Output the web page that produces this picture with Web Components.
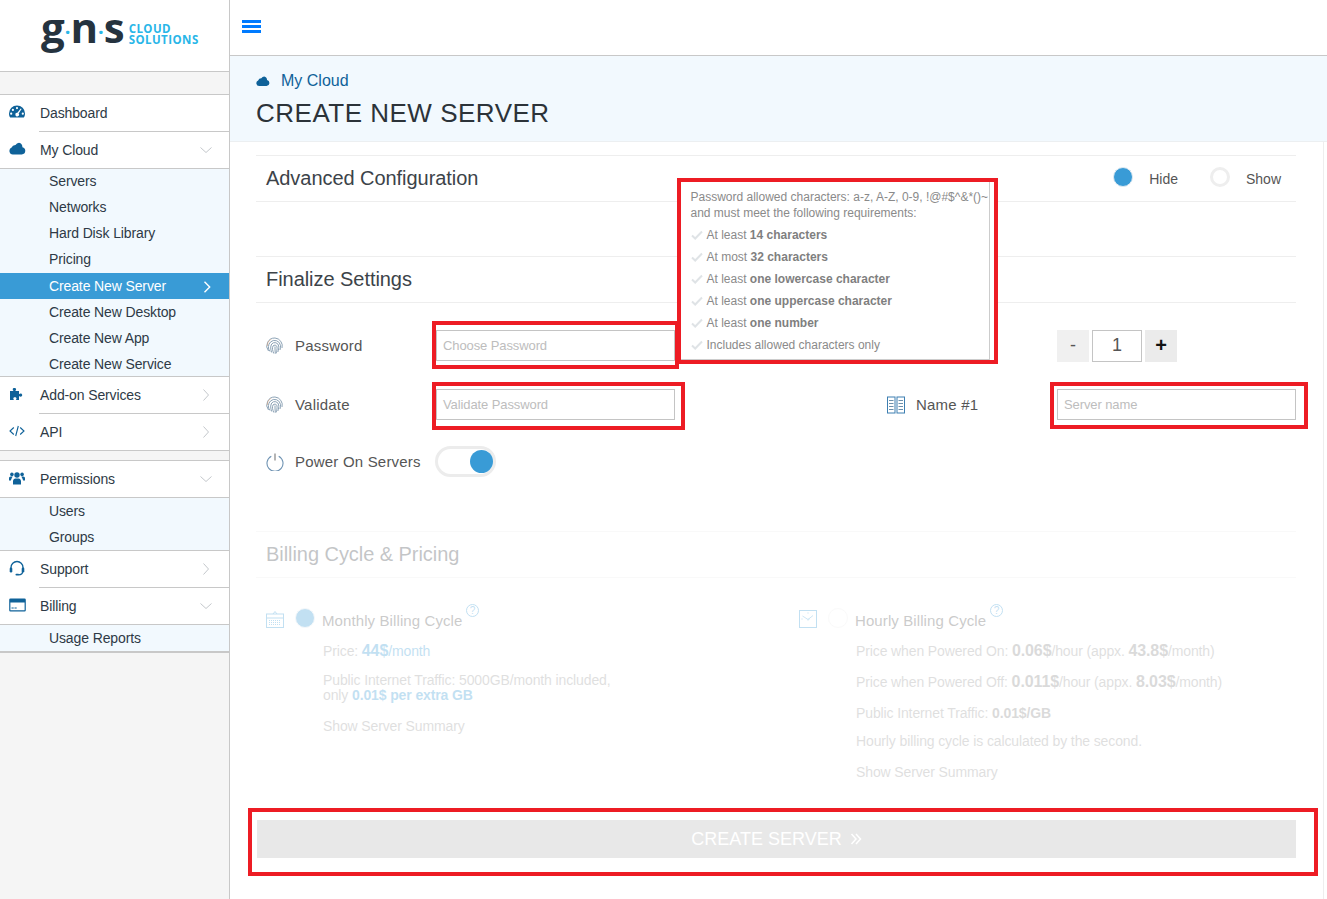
<!DOCTYPE html>
<html lang="en">
<head>
<meta charset="utf-8">
<title>Create New Server</title>
<style>
  html, body { margin: 0; height: 100%; }
  body { font-family: "Liberation Sans", Arial, sans-serif; color: #444; background: #fff; overflow: hidden; }
  .shell { display: flex; height: 899px; position: relative; }
</style>
</head>
<body>
<div class="shell">
  <side-bar>
    <brand-logo></brand-logo>
    <nav-group style="margin-top:22px">
      <nav-item label="Dashboard" icon="dashboard" sep></nav-item>
      <nav-item label="My Cloud" icon="cloud" arrow="down"></nav-item>
      <sub-list>
        <sub-item style="margin-top:-1px">Servers</sub-item>
        <sub-item>Networks</sub-item>
        <sub-item>Hard Disk Library</sub-item>
        <sub-item>Pricing</sub-item>
        <sub-item active style="margin-top:1px">Create New Server</sub-item>
        <sub-item>Create New Desktop</sub-item>
        <sub-item>Create New App</sub-item>
        <sub-item style="margin-bottom:-1px">Create New Service</sub-item>
      </sub-list>
      <nav-item label="Add-on Services" icon="puzzle" arrow="right" sep></nav-item>
      <nav-item label="API" icon="code" arrow="right"></nav-item>
    </nav-group>
    <nav-group style="margin-top:9px">
      <nav-item label="Permissions" icon="users" arrow="down"></nav-item>
      <sub-list>
        <sub-item>Users</sub-item>
        <sub-item>Groups</sub-item>
      </sub-list>
      <nav-item label="Support" icon="headset" arrow="right" sep></nav-item>
      <nav-item label="Billing" icon="card" arrow="down"></nav-item>
      <sub-list>
        <sub-item>Usage Reports</sub-item>
      </sub-list>
    </nav-group>
  </side-bar>

  <main-area>
    <top-bar></top-bar>
    <page-head crumb="My Cloud">CREATE NEW SERVER</page-head>
    <page-content>
      <section-head title="Advanced Configuration">
        <radio-opt checked>Hide</radio-opt>
        <radio-opt>Show</radio-opt>
      </section-head>
      <section-head title="Finalize Settings" style="margin-top:54px"></section-head>

      <form-grid>
        <form-field label="Password" icon="finger"><text-field>Choose Password</text-field></form-field>
        <form-field><qty-counter>1</qty-counter></form-field>
        <form-field label="Validate" icon="finger"><text-field>Validate Password</text-field></form-field>
        <form-field label="Name #1" icon="rack"><text-field>Server name</text-field></form-field>
        <form-field label="Power On Servers" icon="power" style="margin-top:-2px"><on-toggle></on-toggle></form-field>
      </form-grid>

      <billing-block>
        <section-head title="Billing Cycle &amp; Pricing"></section-head>
        <billing-cols>
          <billing-opt label="Monthly Billing Cycle" icon="calendar" checked>
            <bill-line style="margin-top:9px">Price: <b class="big hl">44$</b><span class="hl">/month</span></bill-line>
            <bill-line tight style="margin-top:12px">Public Internet Traffic: 5000GB/month included,<br>only <b class="hl">0.01$ per extra GB</b></bill-line>
            <bill-line style="margin-top:13px">Show Server Summary</bill-line>
          </billing-opt>
          <billing-opt label="Hourly Billing Cycle" icon="clock">
            <bill-line style="margin-top:9px">Price when Powered On: <b class="big">0.06$</b>/hour (appx. <b class="big">43.8$</b>/month)</bill-line>
            <bill-line style="margin-top:11px">Price when Powered Off: <b class="big">0.011$</b>/hour (appx. <b class="big">8.03$</b>/month)</bill-line>
            <bill-line style="margin-top:11px">Public Internet Traffic: <b>0.01$/GB</b></bill-line>
            <bill-line style="margin-top:8px">Hourly billing cycle is calculated by the second.</bill-line>
            <bill-line style="margin-top:11px">Show Server Summary</bill-line>
          </billing-opt>
        </billing-cols>
      </billing-block>

      <create-button>CREATE SERVER</create-button>
    </page-content>
  </main-area>

  <pw-tooltip>
    <tip-check>At least <b>14 characters</b></tip-check>
    <tip-check>At most <b>32 characters</b></tip-check>
    <tip-check>At least <b>one lowercase character</b></tip-check>
    <tip-check>At least <b>one uppercase character</b></tip-check>
    <tip-check>At least <b>one number</b></tip-check>
    <tip-check>Includes allowed characters only</tip-check>
  </pw-tooltip>

  <!-- red annotation frames drawn over the screenshot -->
  <mark-box style="left:677px;top:178px;width:321px;height:186px"></mark-box>
  <mark-box style="left:432px;top:321px;width:247px;height:48px"></mark-box>
  <mark-box style="left:432px;top:382px;width:253px;height:48px"></mark-box>
  <mark-box style="left:1050px;top:382px;width:258px;height:47px"></mark-box>
  <mark-box style="left:248px;top:808px;width:1070px;height:68px"></mark-box>
</div>

<script>
const ICONS = {
  dashboard: `<path fill-rule="evenodd" d="M8 1.5a8 8 0 0 0-8 8c0 1.6.4 3 1.2 4h13.6c.8-1 1.2-2.4 1.2-4a8 8 0 0 0-8-8zM8 3a1.1 1.1 0 1 1 0 2.2A1.1 1.1 0 0 1 8 3zM3.9 4.8a1.1 1.1 0 1 1 0 2.2 1.1 1.1 0 0 1 0-2.2zM2.2 8.6a1.1 1.1 0 1 1 0 2.2 1.1 1.1 0 0 1 0-2.2zM13.8 8.6a1.1 1.1 0 1 1 0 2.2 1.1 1.1 0 0 1 0-2.2zM11.7 4.6l.9.5-3 4.4a1.8 1.8 0 1 1-1.2-.7z"/>`,
  cloud: `<path d="M3.8 13.5A3.6 3.6 0 0 1 2.6 6.6 4 4 0 0 1 6.5 4 4.9 4.9 0 0 1 10 1.7a4.6 4.6 0 0 1 3.4 4.5 3.7 3.7 0 0 1-.6 7.3z"/>`,
  puzzle: `<path d="M1 5h3.6c-.5-.6-.9-1-.9-1.700C3.700 2.500 4.500 2 5.400 2s1.700.5 1.700 1.300c0 .7-.4 1.100-.9 1.700H10v3.300c.5-.5 1-.8 1.600-.8.9 0 1.600.7 1.600 1.600s-.7 1.600-1.600 1.600c-.6 0-1.100-.3-1.600-.8V14H6.800c.4-.5.7-1 .7-1.500 0-.9-.8-1.300-1.600-1.300s-1.600.4-1.600 1.300c0 .5.3 1 .7 1.500H1z"/>`,
  code: `<path fill="none" stroke="currentColor" stroke-width="1.100" d="M4.800 4.500 1 8l3.800 3.500M11.200 4.500 15 8l-3.800 3.500M9.300 3 6.700 13"/>`,
  users: `<circle cx="8" cy="5" r="2.700"/><circle cx="2.900" cy="4.400" r="1.800"/><circle cx="13.100" cy="4.400" r="1.800"/><path d="M4 14.500v-3.200C4 9.400 5.200 8.400 6.500 8.400h3c1.300 0 2.500 1 2.500 2.900v3.200zM0 10.500V8.400c0-1 .7-1.800 1.700-1.800h2c-.3.500-1 1.200-1.800 3.900zM16 10.500V8.400c0-1-.7-1.800-1.700-1.800h-2c.3.500 1 1.200 1.800 3.900z"/>`,
  headset: `<path fill="none" stroke="currentColor" stroke-width="1.300" d="M2 10.500V7.500a6 6 0 0 1 12 0v3M13.500 12c0 1.700-1.800 2.800-4 2.800"/><rect x=".7" y="7.500" width="2.600" height="5" rx="1.200"/><rect x="12.700" y="7.500" width="2.600" height="5" rx="1.200"/><rect x="6.500" y="13.800" width="3.500" height="1.800" rx=".8"/>`,
  card: `<path fill-rule="evenodd" d="M1.500 1.500h14a1.300 1.300 0 0 1 1.300 1.300v10.400a1.300 1.300 0 0 1-1.300 1.300h-14A1.300 1.300 0 0 1 .2 13.200V2.800a1.300 1.300 0 0 1 1.300-1.300zm-.1 4v7.700h14.200V5.500zM2.500 10.500h2.200v1H2.500zM5.500 10.500h2.200v1H5.500z"/>`,
  finger: `<g fill="none" stroke="#7f97ad" stroke-width=".9"><path d="M2.500 14A8 8 0 0 1 9 1a8 8 0 0 1 7 10"/><path d="M4 14.500A7 7 0 0 1 4.500 5 6 6 0 0 1 14.500 8.500c0 1.500 0 3-.5 4.500"/><path d="M5.700 15.500C4.500 12 4.200 9.800 5.700 7a4 4 0 0 1 7 2c.2 2 0 4-.9 6"/><path d="M7.800 16.500C6.500 13.500 6 11 7 9a2.300 2.300 0 0 1 4 .8c.2 2.300 0 4.200-1 6.700"/><path d="M9 9.500c0 2.500 0 4.500 .3 7"/></g><path fill="none" stroke="#d99a6c" stroke-width=".5" d="M1.200 9A8 8 0 0 1 5 2.200"/>`,
  power: `<g fill="none" stroke="#6f93b3" stroke-width="1.100"><path d="M5.300 3.200a8 8 0 1 0 7.400 0"/><path d="M9 .5v7" stroke="#777"/></g>`,
  rack: `<g fill="none" stroke="#3d7fb1" stroke-width="1"><rect x=".5" y="1" width="7.500" height="16"/><rect x="10" y="1" width="7.500" height="16"/></g><path stroke="#6c90ac" stroke-width="1" d="M2 4.500h4.500M2 7.500h4.500M2 10.500h4.500M2 13.500h4.500M11.500 4.500H16M11.500 7.500H16M11.500 10.500H16M11.500 13.500H16"/>`,
  calendar: `<g fill="none" stroke="#399bd6" stroke-width="1"><rect x=".5" y="4" width="17" height="13.500"/><path d="M.5 8h17M7 4l2-2.500L11 4"/></g><path stroke="#399bd6" stroke-dasharray="1 1" d="M3 10.500h12M3 12.500h12M3 14.500h12"/>`,
  clock: `<rect x=".5" y=".5" width="17" height="17" fill="none" stroke="#399bd6"/><path fill="none" stroke="#399bd6" stroke-width=".8" d="M3.500 6 9 9.500l5-4"/><path stroke="#399bd6" stroke-dasharray="1 6" d="M2.500 9H16M9 2.500V16"/>`
};

function define(name, css, html, extra) {
  const tpl = document.createElement("template");
  tpl.innerHTML = `<style>${css}</style>${html}`;
  class Comp extends HTMLElement {
    constructor() {
      super();
      this.attachShadow({ mode: "open" });
      this.shadowRoot.appendChild(tpl.content.cloneNode(true));
      if (extra) extra.call(this, this.shadowRoot);
    }
  }
  customElements.define(name, Comp);
}

const svgIcon = (name, size, box) =>
  `<svg width="${size}" height="${size}" viewBox="0 0 ${box} ${box}" fill="currentColor">${ICONS[name]}</svg>`;

/* ---------- sidebar ---------- */
define("side-bar", `
  :host { display: block; width: 229px; flex: none; box-sizing: content-box; height: 899px;
          background: #f5f5f5; border-right: 1px solid #c8c8c8; }
`, `<slot></slot>`);

define("brand-logo", `
  :host { display: flex; align-items: flex-start; height: 71px; box-sizing: content-box; background: #fff;
          border-bottom: 1px solid #c8c8c8; padding-left: 41px; overflow: hidden; }
  .gns { font: 700 42px/42px "Open Sans", sans-serif; color: #25333f; letter-spacing: -1px; margin-top: 6px; white-space: nowrap; }
  .gns i { font-style: normal; color: #29b6e8; font-size: 20px; vertical-align: 4px; margin: 0 1px; }
  .sub { font: 700 11.5px/11px "Open Sans", sans-serif; color: #29b6e8; margin: 23px 0 0 5px; letter-spacing: .45px; }
`, `<div class="gns">g<i>·</i>n<i>·</i>s</div><div class="sub">CLOUD<br>SOLUTIONS</div>`);

define("nav-group", `
  :host { display: block; background: #fff; border-top: 1px solid #c8c8c8; border-bottom: 1px solid #c8c8c8; }
`, `<slot></slot>`);

define("nav-item", `
  :host { display: block; position: relative; height: 37px; color: #2e3a46; font-size: 14px; }
  :host([sep]) { height: 37px; }
  .row { display: flex; align-items: center; height: 36px; }
  .ic { width: 40px; flex: none; padding-left: 9px; box-sizing: border-box; color: #0f6299; display: flex; margin-top: -1px; }
  .tx { flex: 1; letter-spacing: -.12px; margin-top: -1px; }
  .ch { margin-right: 17px; color: #c4c8cc; display: flex; }
  .line { display: none; height: 1px; background: #c8c8c8; margin-left: 39px; }
  :host([sep]) .line { display: block; }
  :host(:not([sep])) { height: 36px; }
`, `<div class="row"><span class="ic"></span><span class="tx"></span><span class="ch"></span></div><div class="line"></div>`,
function (root) {
  root.querySelector(".tx").textContent = this.getAttribute("label");
  root.querySelector(".ic").innerHTML = svgIcon(this.getAttribute("icon"), 17, 17);
  const arrow = this.getAttribute("arrow");
  if (arrow === "down") root.querySelector(".ch").innerHTML = `<svg width="12" height="12" viewBox="0 0 12 12" fill="none" stroke="currentColor"><path d="M.5 3.500 6 8.500l5.500-5"/></svg>`;
  if (arrow === "right") root.querySelector(".ch").innerHTML = `<svg width="12" height="12" viewBox="0 0 12 12" fill="none" stroke="currentColor"><path d="M3.500 .5 8.500 6l-5 5.500"/></svg>`;
});

define("sub-list", `
  :host { display: block; background: #f2f9fe; border-top: 1px solid #c8c8c8; border-bottom: 1px solid #c8c8c8; }
`, `<slot></slot>`);

define("sub-item", `
  :host { display: flex; align-items: center; justify-content: space-between; height: 26px; padding: 0 18px 0 49px;
          color: #2e3a46; font-size: 14px; letter-spacing: -.12px; }
  :host([active]) { background: #399bd6; color: #fff; }
  svg { display: none; margin-top: 2px; }
  :host([active]) svg { display: block; }
`, `<span><slot></slot></span><svg width="8" height="12" viewBox="0 0 8 12" fill="none" stroke="#fff" stroke-width="1.400"><path d="M1.500 .8 6.700 6l-5.200 5.200"/></svg>`);

/* ---------- main column ---------- */
define("main-area", `
  :host { display: flex; flex-direction: column; flex: 1; min-width: 0; }
`, `<slot></slot>`);

define("top-bar", `
  :host { display: block; height: 55px; flex: none; border-bottom: 1px solid #c8c8c8; box-sizing: content-box; padding-left: 12px; }
  svg { display: block; margin-top: 20px; }
`, `<svg width="19" height="13" viewBox="0 0 19 13" fill="#007bff"><rect width="19" height="3"/><rect y="5" width="19" height="3"/><rect y="10" width="19" height="3"/></svg>`);

define("page-head", `
  :host { display: block; height: 85px; flex: none; background: #f2f9fe; border-bottom: 1px solid #eceff1; padding: 15px 0 0 26px; box-sizing: border-box; height: 86px; }
  .crumb { display: flex; align-items: center; color: #0f6299; height: 20px; font-size: 16px; gap: 11px; }
  .crumb svg { margin-top: 1px; }
  h1 { margin: 6px 0 0; font-size: 26px; line-height: 32px; font-weight: 400; color: #2c3339; letter-spacing: .5px; white-space: nowrap; }
`, `<div class="crumb"><svg width="14" height="14" viewBox="0 0 17 17" fill="currentColor">${ICONS.cloud}</svg><span class="t"></span></div><h1><slot></slot></h1>`,
function (root) { root.querySelector(".t").textContent = this.getAttribute("crumb"); });

define("page-content", `
  :host { display: block; flex: 1; margin-right: 3px; padding: 13px 27px 0 26px; border-right: 1px solid #eee; }
`, `<slot></slot>`);

define("section-head", `
  :host { display: flex; align-items: center; justify-content: space-between; height: 47px; box-sizing: border-box;
          border-top: 1px solid #eee; border-bottom: 1px solid #eee; padding: 0 15px 0 10px; }
  .t { font-size: 20px; color: #3c4349; letter-spacing: -.05px; margin-top: -1px; }
  .r { display: flex; align-items: center; gap: 32px; margin-top: 1px; }
`, `<span class="t"></span><span class="r"><slot></slot></span>`,
function (root) { root.querySelector(".t").textContent = this.getAttribute("title"); });

define("radio-opt", `
  :host { display: flex; align-items: center; gap: 16px; font-size: 14px; color: #555; }
  .dot { width: 20px; height: 20px; box-sizing: border-box; border-radius: 50%; border: 3px solid #eee; margin-top: -4px; }
  :host([checked]) .dot { background: #399bd6; border: 1.500px solid #dfeaf2; }
`, `<span class="dot"></span><span><slot></slot></span>`);

define("form-grid", `
  :host { display: grid; grid-template-columns: 621px 1fr; row-gap: 28px; padding: 27px 0 0 10px; align-items: center; }
`, `<slot></slot>`);

define("form-field", `
  :host { display: flex; align-items: center; height: 31px; font-size: 15px; color: #555; letter-spacing: .2px; }
  .lab { display: flex; align-items: center; width: 170px; flex: none; box-sizing: border-box; white-space: nowrap; }
  .ic { width: 29px; flex: none; display: flex; }
`, `<span class="lab"><span class="ic"></span><span class="t"></span></span><slot></slot>`,
function (root) {
  const icon = this.getAttribute("icon");
  if (icon) root.querySelector(".ic").innerHTML = svgIcon(icon, 18, 18);
  root.querySelector(".t").textContent = this.getAttribute("label") || "";
});

define("text-field", `
  :host { display: flex; align-items: center; width: 239px; height: 31px; box-sizing: border-box; border: 1px solid #c4c4c4;
          padding: 0 6px; font-size: 13px; color: #bdbdbd; letter-spacing: -.1px; background: #fff; }
`, `<slot></slot>`);

define("qty-counter", `
  :host { display: flex; gap: 3px; font-size: 18px; color: #444; letter-spacing: 0; }
  span, .val { display: flex; align-items: center; justify-content: center; height: 32px; box-sizing: border-box; }
  .minus { width: 32px; background: #f0f0f0; color: #555; }
  .val { width: 50px; border: 1px solid #c4c4c4; color: #555; }
  .plus { width: 32px; background: #ebebeb; color: #111; font-size: 20px; font-weight: 700; }
`, `<span class="minus">-</span><div class="val"><slot></slot></div><span class="plus">+</span>`);

define("on-toggle", `
  :host { display: block; width: 61px; height: 31px; box-sizing: border-box; border: 3px solid #ececec; border-radius: 16px; position: relative; background: #fff; margin-left: -1px; }
  i { position: absolute; right: 0; top: 1px; width: 23px; height: 23px; border-radius: 50%; background: #399bd6; }
`, `<i></i>`);

/* ---------- billing, faded while the form is incomplete ---------- */
define("billing-block", `
  :host { display: block; opacity: .3; margin-top: 54px; }
`, `<slot></slot>`);

define("billing-cols", `
  :host { display: grid; grid-template-columns: 533px 1fr; padding: 28px 0 0 10px; align-items: start; }
`, `<slot></slot>`);

define("billing-opt", `
  :host { display: block; font-size: 15px; color: #555; }
  .head { display: flex; align-items: center; height: 26px; position: relative; white-space: nowrap; }
  .ic { width: 29px; flex: none; display: flex; margin-top: -1px; }
  .dot { width: 20px; height: 20px; box-sizing: border-box; border-radius: 50%; border: 1.500px solid #eee; margin-right: 7px; margin-top: -2px; }
  :host([checked]) .dot { background: #399bd6; border-color: #dfeaf2; }
  .t { margin-top: 2px; letter-spacing: .1px; }
  .q { color: #399bd6; margin: -18px 0 0 4px; display: flex; }
  .body { margin-left: 57px; }
`, `<div class="head"><span class="ic"></span><span class="dot"></span><span class="t"></span>
   <span class="q"><svg width="13" height="13" viewBox="0 0 13 13"><circle cx="6.500" cy="6.500" r="6" fill="none" stroke="currentColor"/><text x="6.500" y="10" text-anchor="middle" font-size="10" fill="currentColor" font-family="Liberation Sans">?</text></svg></span></div>
   <div class="body"><slot></slot></div>`,
function (root) {
  root.querySelector(".ic").innerHTML = svgIcon(this.getAttribute("icon"), 18, 18);
  root.querySelector(".t").textContent = this.getAttribute("label");
});

define("bill-line", `
  :host { display: block; font-size: 14px; line-height: 20px; color: #999; white-space: nowrap; letter-spacing: -.12px; }
  :host([tight]) { line-height: 15px; }
  ::slotted(b) { font-weight: 700; color: #888; }
  ::slotted(b.big) { font-size: 16px; }
  ::slotted(.hl) { color: #399bd6; }
`, `<slot></slot>`);

define("create-button", `
  :host { display: flex; align-items: center; justify-content: center; gap: 8px; margin: 38px 0 0 1px; height: 38px;
          background: #e8e8e8; color: #fff; font-size: 18px; }
`, `<span><slot></slot></span><svg width="12" height="12" viewBox="0 0 12 12" fill="none" stroke="#fff" stroke-width="1.500"><path d="M1.500 1 6 6l-4.500 5M6 1l4.500 5L6 11"/></svg>`);

/* ---------- overlays ---------- */
define("pw-tooltip", `
  :host { position: absolute; left: 681px; top: 182px; width: 309px; height: 178px; box-sizing: border-box; background: #fff;
          border-right: 1px solid #ccc; border-bottom: 1px solid #ccc; box-shadow: 4px 0 0 #fff;
          padding: 7px 0 0 9.500px; font-size: 12px; color: #8a8a8a; z-index: 2; }
  p { margin: 0; line-height: 16px; white-space: nowrap; }
  .list { display: grid; grid-auto-rows: 22px; margin-top: 3px; }
`, `<p>Password allowed characters: a-z, A-Z, 0-9, !@#$^&amp;*()~</p><p>and must meet the following requirements:</p><div class="list"><slot></slot></div>`);

define("tip-check", `
  :host { display: flex; align-items: center; gap: 4px; white-space: nowrap; }
  svg { flex: none; }
  ::slotted(b) { font-weight: 700; color: #7f7f7f; }
`, `<svg width="12" height="10" viewBox="0 0 12 10" fill="none" stroke="#dfe3e6" stroke-width="2"><path d="M1 5.500 4.200 8.500 11 1.500"/></svg><span><slot></slot></span>`);

define("mark-box", `
  :host { position: absolute; box-sizing: border-box; border: 4px solid #ed1c24; z-index: 3; pointer-events: none; }
`, ``);
</script>
</body>
</html>
